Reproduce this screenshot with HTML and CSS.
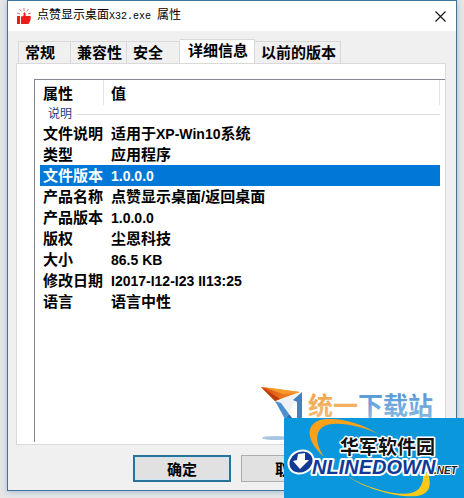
FILE: index.html
```html
<!DOCTYPE html>
<html lang="zh-CN">

<head>
    <meta charset="UTF-8">
    <meta name="viewport" content="width=device-width, initial-scale=1.0">
    <title>点赞显示桌面X32.exe 属性</title>
    <link rel="stylesheet" href="styles.css">
</head>

<body>
    <main class="dialog">
        <header class="title-bar">
            <svg class="app-icon" width="14" height="16" viewBox="0 0 14 16">
                <path d="M0 8h3v8H0zM4 8.500l2.500-.5V5.500C6.500 4 8.500 4 8.600 5.500V8H13c1.200.3 1.200 1.700.4 2 .6.700.4 1.600-.2 1.900.3.8 0 1.500-.6 1.700.1 1.300-.6 2.400-1.600 2.400H4z" fill="#ed1c1c" />
                <path d="M7 0v3M2.500 1l2 2.500M11.500 1l-2 2.500M0 5l3 1M14 5l-3 1" stroke="#e57373" fill="none" />
            </svg>
            <h1 class="title">点赞显示桌面<span class="mono">X32.exe </span>属性</h1>
            <button class="close" type="button" aria-label="关闭">
                <svg width="11" height="11" viewBox="0 0 11 11">
                    <path d="M.5.5l10 10M10.500.5l-10 10" stroke="#111" stroke-width="1.100" fill="none" />
                </svg>
            </button>
        </header>

        <div class="content">
            <nav class="tabs" role="tablist">
                <button class="tab" type="button" role="tab">常规</button>
                <button class="tab" type="button" role="tab">兼容性</button>
                <button class="tab" type="button" role="tab">安全</button>
                <button class="tab active" type="button" role="tab" aria-selected="true">详细信息</button>
                <button class="tab" type="button" role="tab">以前的版本</button>
            </nav>

            <section class="panel">
                <div class="list">
                    <table class="details">
                        <thead>
                            <tr>
                                <th class="name">属性</th>
                                <th>值</th>
                            </tr>
                        </thead>
                        <tbody>
                            <tr class="group">
                                <td colspan="2"><div class="group-label">说明</div></td>
                            </tr>
                            <tr><td>文件说明</td><td>适用于<span class="latin">XP-Win10</span>系统</td></tr>
                            <tr><td>类型</td><td>应用程序</td></tr>
                            <tr class="selected"><td>文件版本</td><td><span class="latin">1.0.0.0</span></td></tr>
                            <tr><td>产品名称</td><td>点赞显示桌面/返回桌面</td></tr>
                            <tr><td>产品版本</td><td><span class="latin">1.0.0.0</span></td></tr>
                            <tr><td>版权</td><td>尘恩科技</td></tr>
                            <tr><td>大小</td><td><span class="latin">86.5 KB</span></td></tr>
                            <tr><td>修改日期</td><td><span class="latin">I2017-I12-I23 II13:25</span></td></tr>
                            <tr><td>语言</td><td>语言中性</td></tr>
                        </tbody>
                    </table>
                </div>
            </section>

            <footer class="actions">
                <button class="btn primary" type="button">确定</button>
                <button class="btn" type="button">取消</button>
            </footer>
        </div>
    </main>

    <svg class="mark-tongyi" width="176" height="58" viewBox="0 0 176 58" role="img" aria-label="统一下载站">
        <defs>
            <linearGradient id="orange" x1="0" y1="0" x2="0" y2="1">
                <stop offset="0" stop-color="#f0a03c" />
                <stop offset="1" stop-color="#f3bd80" />
            </linearGradient>
            <linearGradient id="blue" x1="0" y1="0" x2="0" y2="1">
                <stop offset="0" stop-color="#4b8fd0" />
                <stop offset="1" stop-color="#8fbde4" />
            </linearGradient>
            <linearGradient id="wing" x1="0" y1="0" x2="1" y2="0">
                <stop offset="0" stop-color="#d9480f" />
                <stop offset="1" stop-color="#f79a2b" />
            </linearGradient>
        </defs>
        <ellipse cx="15" cy="52" rx="14" ry="2" fill="#a9c6e2" />
        <path d="M40 6L15 15l12 13z" fill="#eef2f7" />
        <path d="M0 1l39 5-25 9z" fill="url(#wing)" />
        <path d="M0 1l14 14 5-2z" fill="#b93c0a" />
        <path d="M2 1l37 5-17 2z" fill="#f79a2b" />
        <path d="M14 15l6 2 8 11-4 5z" fill="#4d8fcb" />
        <path d="M28 28l4 5h-8z" fill="#2f6fae" />
        <path d="M32 14l9-8v27h-5V16z" fill="#3f83c3" />
        <text class="tongyi-text" x="47" y="29" fill="url(#orange)">统一</text>
        <text class="tongyi-text" x="97" y="29" fill="url(#blue)">下载站</text>
    </svg>

    <div class="mark-onlinedown">
        <svg width="180" height="80" viewBox="0 0 180 80" role="img" aria-label="华军软件园 ONLINEDOWN.NET">
            <path d="M40 39C21 22 20 3 42 1c18-1 37 5 54 16C80 9 62 5 49 6 31 7 29 22 40 39z" fill="#f9a11a" />
            <path d="M63 58c22 13 50 20 64 17 8-2 13-8 12-20h5c4 12 2 21-11 23-20 2-51-7-70-20z" fill="#fbc816" />
            <text class="huajun" x="56" y="36">华军软件园</text>
            <text class="online" x="28" y="56">NLINEDOWN</text>
            <text class="net" x="150" y="56">.NET</text>
            <ellipse cx="17" cy="44" rx="14" ry="12" transform="rotate(-30 17 44)" fill="#fff" />
            <ellipse cx="17" cy="44" rx="12" ry="10" transform="rotate(-30 17 44)" fill="#123a94" />
            <path d="M14 36l7-1 0 7 4 0-9 9-7-8 4-1z" fill="#fff" />
        </svg>
    </div>
</body>

</html>
```
FILE: styles.css
```css
/* Global Styles */
* {
    box-sizing: border-box;
}

body {
    display: flex;
    position: relative;
    min-height: 100vh;
    margin: 0;
    padding: 0 7px 7px;
    overflow: hidden;
    background: #e6e6e6;
    font-family: "Liberation Sans", "Noto Sans CJK SC", sans-serif;
    font-size: 15px;
    color: #000;
}

button {
    font-family: inherit;
    font-size: 15px;
    font-weight: 700;
    color: #000;
}

/* Window frame */
.dialog {
    display: flex;
    flex: 1;
    flex-direction: column;
    border: 1px solid #3f7598;
    background: #f0f0f0;
    box-shadow: 0 1px 6px #a3bdd0;
}

.title-bar {
    display: flex;
    align-items: center;
    height: 30px;
    padding: 0 10px 0 9px;
    background: #fff;
}

.app-icon {
    margin-right: 6px;
}

.title {
    flex: 1;
    margin: 0;
    font-size: 12px;
    font-weight: 400;
    line-height: 16px;
}

.mono {
    font-family: "Liberation Mono", monospace;
    font-size: 10px;
    white-space: pre;
}

.close {
    display: flex;
    padding: 0;
    border: 0;
    background: none;
}

.content {
    display: flex;
    flex: 1;
    flex-direction: column;
    padding: 8px 10px 8px 8px;
}

/* Tabs */
.tabs {
    display: flex;
    align-items: flex-end;
    padding-left: 2px;
}

.tab {
    height: 22px;
    min-width: 53px;
    padding: 0 4px 0 6px;
    border: 1px solid #d9d9d9;
    border-width: 1px 1px 0 0;
    background: #f0f0f0;
    line-height: 20px;
    text-align: left;
}

.tab:first-child {
    border-left-width: 1px;
}

.tab.active {
    height: 25px;
    margin-bottom: -1px;
    padding: 0 6px 2px 8px;
    background: #fff;
}

/* Details list */
.panel {
    display: flex;
    flex: 1;
    padding: 15px 0 2px 17px;
    border: 1px solid #d9d9d9;
    background: #fff;
}

.list {
    flex: 1;
    border: 1px solid #828790;
    border-width: 1px 0 0 1px;
}

.details {
    width: 100%;
    padding: 0 5px;
    border-spacing: 0;
    table-layout: fixed;
    font-weight: 700;
}

.details th,
.details td {
    height: 21px;
    padding: 0 0 0 3px;
    line-height: 18px;
    text-align: left;
    white-space: nowrap;
}

.details th {
    height: 25px;
    padding-top: 2px;
    border-right: 1px solid #e2e2e2;
}

.details th + th,
.details td + td {
    padding-left: 7px;
}

.details .name {
    width: 64px;
}

.details .group td {
    height: 18px;
    padding-left: 8px;
    line-height: 16px;
}

.group-label {
    display: flex;
    align-items: center;
    gap: 5px;
    font-size: 12px;
    font-weight: 400;
    color: #1e3c78;
}

.group-label::after {
    flex: 1;
    height: 1px;
    background: #dcdcdc;
    content: "";
}

.details .selected td {
    background: #0078d7;
    color: #fff;
}

.latin {
    font-size: 14px;
}

/* Buttons */
.actions {
    display: flex;
    justify-content: flex-end;
    gap: 10px;
    padding: 10px 107px 0 0;
}

.btn {
    width: 98px;
    height: 27px;
    padding: 0;
    border: 1px solid #adadad;
    background: #e1e1e1;
}

.btn.primary {
    border: 2px solid #2b7299;
    box-shadow: inset 0 0 0 1px #cfe6f5;
}

/* Site marks over the window */
.mark-tongyi {
    position: absolute;
    right: 27px;
    bottom: 54px;
}

.tongyi-text {
    font-family: "Noto Sans CJK SC", sans-serif;
    font-size: 25px;
    font-weight: 700;
}

.mark-onlinedown {
    position: absolute;
    right: 0;
    bottom: 0;
    height: 80px;
    background: #0a97dc;
}

.huajun,
.online,
.net {
    font-weight: 700;
    stroke: #fff;
    stroke-width: 4px;
    stroke-linejoin: round;
    paint-order: stroke;
}

.huajun {
    font-family: "Noto Sans CJK SC", sans-serif;
    font-size: 19px;
    stroke-width: 3px;
    fill: #111;
}

.online {
    font-size: 20px;
    font-style: italic;
    fill: #123a94;
}

.net {
    font-size: 10px;
    font-style: italic;
    stroke-width: 2px;
    fill: #222;
}
```
